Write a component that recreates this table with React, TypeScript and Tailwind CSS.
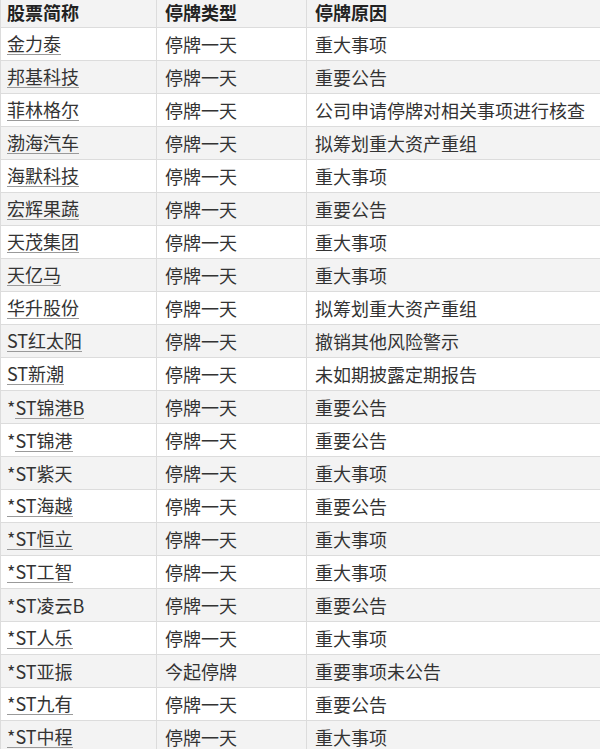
type Row = { name: string; prefix?: string; link: "all" | "partial" | "none"; type: string; reason: string };

const rows: Row[] = [
    { name: "金力泰", link: "all", type: "停牌一天", reason: "重大事项" },
    { name: "邦基科技", link: "all", type: "停牌一天", reason: "重要公告" },
    { name: "菲林格尔", link: "all", type: "停牌一天", reason: "公司申请停牌对相关事项进行核查" },
    { name: "渤海汽车", link: "all", type: "停牌一天", reason: "拟筹划重大资产重组" },
    { name: "海默科技", link: "all", type: "停牌一天", reason: "重大事项" },
    { name: "宏辉果蔬", link: "all", type: "停牌一天", reason: "重要公告" },
    { name: "天茂集团", link: "all", type: "停牌一天", reason: "重大事项" },
    { name: "天亿马", link: "all", type: "停牌一天", reason: "重大事项" },
    { name: "华升股份", link: "all", type: "停牌一天", reason: "拟筹划重大资产重组" },
    { name: "ST红太阳", link: "all", type: "停牌一天", reason: "撤销其他风险警示" },
    { name: "ST新潮", link: "all", type: "停牌一天", reason: "未如期披露定期报告" },
    { name: "ST锦港B", prefix: "*", link: "partial", type: "停牌一天", reason: "重要公告" },
    { name: "ST锦港", prefix: "*", link: "partial", type: "停牌一天", reason: "重要公告" },
    { name: "*ST紫天", link: "none", type: "停牌一天", reason: "重大事项" },
    { name: "*ST海越", link: "all", type: "停牌一天", reason: "重要公告" },
    { name: "*ST恒立", link: "all", type: "停牌一天", reason: "重大事项" },
    { name: "*ST工智", link: "all", type: "停牌一天", reason: "重大事项" },
    { name: "*ST凌云B", link: "none", type: "停牌一天", reason: "重要公告" },
    { name: "*ST人乐", link: "all", type: "停牌一天", reason: "重大事项" },
    { name: "*ST亚振", link: "none", type: "今起停牌", reason: "重要事项未公告" },
    { name: "*ST九有", link: "all", type: "停牌一天", reason: "重要公告" },
    { name: "*ST中程", link: "all", type: "停牌一天", reason: "重大事项" },
];

function Name({ row }: { row: Row }) {
    if (row.link === "none") return <span>{row.name}</span>;
    const link = (
        <a href="#" className="inline-block leading-none pb-[2px] border-b border-[#9a9a9a] text-[#333]">
            {row.name}
        </a>
    );
    return row.prefix ? (
        <span>
            {row.prefix}
            {link}
        </span>
    ) : (
        link
    );
}

export default function App() {
    return (
        <div
            className="w-[600px] h-[749px] overflow-hidden bg-white text-[18px] text-[#333]"
            style={{ fontFamily: '"Noto Sans CJK SC", "Liberation Sans", sans-serif' }}
        >
            <div className="-mt-[6px] border-l border-[#dcdcdc]">
                {/* Header */}
                <div className="flex h-[34px] bg-[#f3f3f3] border-b border-[#dcdcdc] font-bold text-[#222]">
                    <div className="w-[156px] shrink-0 flex items-center pl-[6px] pt-[3px] border-r border-[#dcdcdc]">股票简称</div>
                    <div className="w-[150px] shrink-0 flex items-center pl-[8px] pt-[3px] border-r border-[#dcdcdc]">停牌类型</div>
                    <div className="flex-1 flex items-center pl-[8px] pt-[3px]">停牌原因</div>
                </div>
                {rows.map((row, i) => (
                    <div
                        key={row.name}
                        className={`flex h-[33px] border-b border-[#dcdcdc] ${i % 2 === 1 ? "bg-[#f3f3f3]" : "bg-white"}`}
                    >
                        <div className="w-[156px] shrink-0 flex items-center pl-[6px] border-r border-[#dcdcdc] whitespace-nowrap">
                            <Name row={row} />
                        </div>
                        <div className="w-[150px] shrink-0 flex items-center pl-[8px] border-r border-[#dcdcdc] whitespace-nowrap">
                            {row.type}
                        </div>
                        <div className="flex-1 flex items-center pl-[8px] whitespace-nowrap">{row.reason}</div>
                    </div>
                ))}
            </div>
        </div>
    );
}
